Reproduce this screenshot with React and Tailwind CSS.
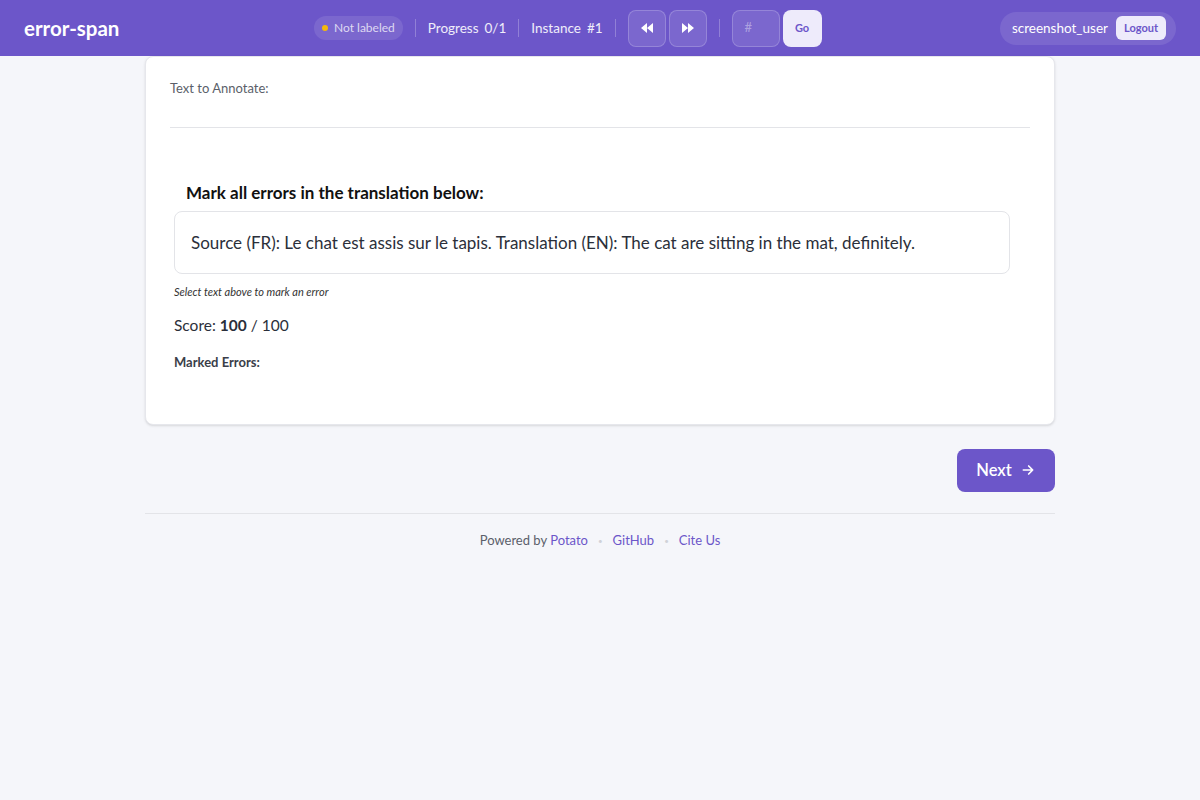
import React from "react";

export default function App() {
  const font = { fontFamily: "Lato, 'Noto Sans', sans-serif" };
  return (
    <div className="min-h-[800px] bg-[#f5f6fa]" style={font}>
      <header className="h-14 bg-[#6c56c9] flex items-center px-6">
        <div className="w-[290px] text-white font-bold text-[20.5px]">error-span</div>
        <div className="flex items-center">
          <div className="flex items-center gap-1.5 h-6 px-2 rounded-full bg-white/10 text-[12px] text-white/75">
            <span className="w-[6px] h-[6px] rounded-full bg-[#f5b90b]"></span>
            Not labeled
          </div>
          <div className="w-px h-[18px] bg-white/25 mx-3"></div>
          <div className="text-[13.5px] text-white/90 flex gap-1.5"><span>Progress</span><span>0/1</span></div>
          <div className="w-px h-[18px] bg-white/25 mx-3"></div>
          <div className="text-[13.5px] text-white/90 flex gap-1.5"><span>Instance</span><span>#1</span></div>
          <div className="w-px h-[18px] bg-white/25 mx-3"></div>
          <div className="flex gap-[3px]">
            <button className="w-[38px] h-[37px] rounded-lg bg-white/10 border border-white/20 flex items-center justify-center">
              <svg width="12" height="10" viewBox="0 0 12 10" fill="white"><path d="M6 0 L0 5 L6 10 Z M12 0 L6 5 L12 10 Z" /></svg>
            </button>
            <button className="w-[38px] h-[37px] rounded-lg bg-white/10 border border-white/20 flex items-center justify-center">
              <svg width="12" height="10" viewBox="0 0 12 10" fill="white"><path d="M0 0 L6 5 L0 10 Z M6 0 L12 5 L6 10 Z" /></svg>
            </button>
          </div>
          <div className="w-px h-[18px] bg-white/25 mx-3"></div>
          <div className="flex gap-[3px]">
            <div className="w-12 h-[37px] rounded-lg bg-white/10 border border-white/20 flex items-center pl-3 text-[13px] text-white/40">#</div>
            <button className="w-[39px] h-[37px] rounded-lg bg-[#eeebfb] text-[#6c56c9] font-bold text-[11px]">Go</button>
          </div>
        </div>
        <div className="ml-auto flex items-center gap-2 h-[33px] pl-3 pr-[10px] rounded-full bg-white/10">
          <span className="text-white text-[13.5px]">screenshot_user</span>
          <button className="h-6 px-2 rounded-md bg-[#eeebfb] text-[#6c56c9] text-[11px] font-bold">Logout</button>
        </div>
      </header>

      <main className="w-[910px] mx-auto">
        <div className="bg-white rounded-lg border border-[#e6e7ec] shadow-sm px-6 pt-[22px] pb-[51px]">
          <div className="text-[13px] text-[#5b5f6a]">Text to Annotate:</div>
          <div className="h-px bg-[#e3e4e8] mt-[28px]"></div>
          <div className="px-1 pt-[53px]">
            <div className="font-bold text-[17px] text-[#111] pl-3 leading-6">Mark all errors in the translation below:</div>
            <div className="mt-[6px] mr-[16px] border border-[#e3e4e8] rounded-lg px-4 py-[19px] text-[17px] text-[#2b2f3a] leading-[23px]">
              Source (FR): Le chat est assis sur le tapis. Translation (EN): The cat are sitting in the mat, definitely.
            </div>
            <div className="mt-[10px] text-[11px] italic text-[#333]">Select text above to mark an error</div>
            <div className="mt-[14px] text-[15.5px] text-[#2b2f3a]">Score: <b>100</b> / 100</div>
            <div className="mt-[16px] text-[13px] font-bold text-[#3a3e49]">Marked Errors:</div>
          </div>
        </div>
        <div className="flex justify-end mt-[24px]">
          <button className="h-[43px] w-[98px] rounded-lg bg-[#6c56c9] text-white text-[16.5px] font-semibold flex items-center justify-center gap-2">
            Next
            <svg width="16" height="16" viewBox="0 0 24 24" fill="none" stroke="white" strokeWidth="2.5" strokeLinecap="round" strokeLinejoin="round"><path d="M5 12h14M13 6l6 6-6 6" /></svg>
          </button>
        </div>
        <div className="h-px bg-[#e3e4e8] mt-[21px]"></div>
        <div className="flex justify-center items-center gap-2.5 mt-[17px] text-[13px] text-[#5b5f6a]">
          <span>Powered by <span className="text-[#6c56c9]">Potato</span></span>
          <span className="text-[#d0d2d8] text-[8px]">•</span>
          <span className="text-[#6c56c9]">GitHub</span>
          <span className="text-[#d0d2d8] text-[8px]">•</span>
          <span className="text-[#6c56c9]">Cite Us</span>
        </div>
      </main>
    </div>
  );
}
